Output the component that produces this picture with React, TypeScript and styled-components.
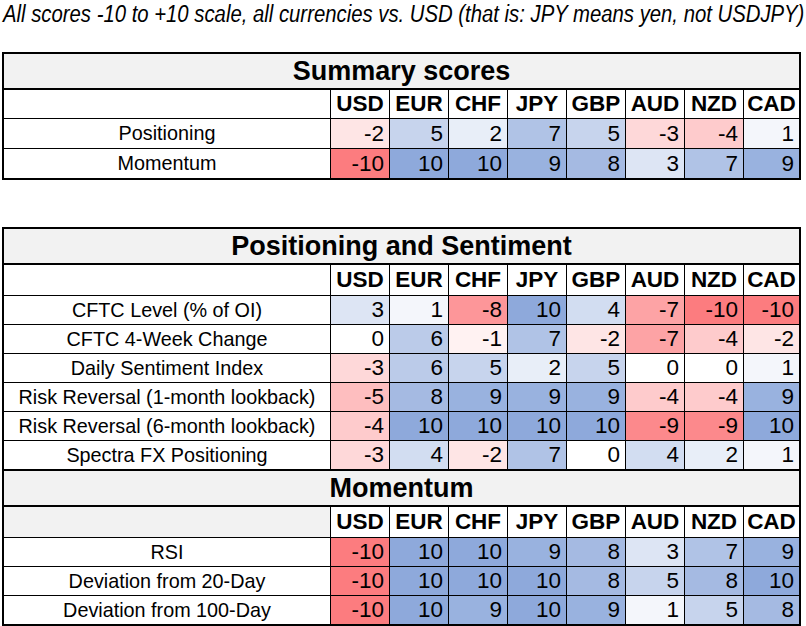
import React from "react";
import styled, { createGlobalStyle } from "styled-components";

const GlobalStyle = createGlobalStyle`
  body {
    margin: 0;
    background: #fff;
    font-family: "Liberation Sans", Arial, sans-serif;
    color: #000;
  }
`;

const CURRENCIES = ["USD", "EUR", "CHF", "JPY", "GBP", "AUD", "NZD", "CAD"];

type Row = { label: string; values: number[] };

const summary: Row[] = [
  { label: "Positioning", values: [-2, 5, 2, 7, 5, -3, -4, 1] },
  { label: "Momentum", values: [-10, 10, 10, 9, 8, 3, 7, 9] },
];

const positioning: Row[] = [
  { label: "CFTC Level (% of OI)", values: [3, 1, -8, 10, 4, -7, -10, -10] },
  { label: "CFTC 4-Week Change", values: [0, 6, -1, 7, -2, -7, -4, -2] },
  { label: "Daily Sentiment Index", values: [-3, 6, 5, 2, 5, 0, 0, 1] },
  { label: "Risk Reversal (1-month lookback)", values: [-5, 8, 9, 9, 9, -4, -4, 9] },
  { label: "Risk Reversal (6-month lookback)", values: [-4, 10, 10, 10, 10, -9, -9, 10] },
  { label: "Spectra FX Positioning", values: [-3, 4, -2, 7, 0, 4, 2, 1] },
];

const momentum: Row[] = [
  { label: "RSI", values: [-10, 10, 10, 9, 8, 3, 7, 9] },
  { label: "Deviation from 20-Day", values: [-10, 10, 10, 10, 8, 5, 8, 10] },
  { label: "Deviation from 100-Day", values: [-10, 10, 9, 10, 9, 1, 5, 8] },
];

// 3-colour scale: red at -10, white at 0, blue at +10
function scoreColor(v: number) {
  const t = Math.min(Math.abs(v), 10) / 10;
  const end = v < 0 ? [252, 124, 127] : [142, 169, 219];
  const c = end.map((e) => Math.round(255 + (e - 255) * t));
  return `rgb(${c[0]}, ${c[1]}, ${c[2]})`;
}

const Page = styled.div`
  padding: 1px 0 0 2px;
`;

const Caption = styled.div`
  font-style: italic;
  font-size: 23.5px;
  line-height: 26px;
  white-space: nowrap;
  transform: scaleX(0.864);
  transform-origin: left center;
  margin-left: 1px;
`;

const Sheet = styled.div<{ $rows: string; $top: number }>`
  display: grid;
  grid-template-columns: 326px repeat(7, 58px) 55px;
  grid-template-rows: ${(p) => p.$rows};
  gap: 1px;
  width: max-content;
  margin-top: ${(p) => p.$top}px;
  background: #000;
  border: 2px solid #000;
`;

const Title = styled.div<{ $ruleAbove?: boolean }>`
  grid-column: 1 / -1;
  display: flex;
  align-items: center;
  justify-content: center;
  background: #f2f2f2;
  border-bottom: 1px solid #000;
  border-top: ${(p) => (p.$ruleAbove ? "1px solid #000" : "none")};
  font-size: 27px;
  font-weight: bold;
`;

const Head = styled.div<{ $shade?: boolean }>`
  display: flex;
  align-items: center;
  justify-content: center;
  background: ${(p) => (p.$shade ? "#f2f2f2" : "#fff")};
  font-size: 22.5px;
  font-weight: bold;
  white-space: nowrap;
`;

const Label = styled.div`
  display: flex;
  align-items: center;
  justify-content: center;
  background: #fff;
  font-size: 19.8px;
  white-space: nowrap;
`;

const Value = styled.div<{ $v: number }>`
  display: flex;
  align-items: center;
  justify-content: flex-end;
  padding-right: 5px;
  background: ${(p) => scoreColor(p.$v)};
  font-size: 22.5px;
`;

function HeaderRow({ shade }: { shade?: boolean }) {
  return (
    <>
      <Head $shade={shade} />
      {CURRENCIES.map((c) => (
        <Head key={c}>{c}</Head>
      ))}
    </>
  );
}

function Rows({ rows }: { rows: Row[] }) {
  return (
    <>
      {rows.map((r) => (
        <React.Fragment key={r.label}>
          <Label>{r.label}</Label>
          {r.values.map((v, i) => (
            <Value key={i} $v={v}>
              {v}
            </Value>
          ))}
        </React.Fragment>
      ))}
    </>
  );
}

export default function App() {
  return (
    <Page>
      <GlobalStyle />
      <Caption>
        All scores -10 to +10 scale, all currencies vs. USD (that is: JPY means yen, not USDJPY)
      </Caption>

      <Sheet $top={25} $rows="35px 28px 29px 29px">
        <Title>Summary scores</Title>
        <HeaderRow />
        <Rows rows={summary} />
      </Sheet>

      <Sheet $top={47} $rows="35px 30px repeat(6, 28px) 36px 30px repeat(3, 28px)">
        <Title>Positioning and Sentiment</Title>
        <HeaderRow />
        <Rows rows={positioning} />
        <Title $ruleAbove>Momentum</Title>
        <HeaderRow shade />
        <Rows rows={momentum} />
      </Sheet>
    </Page>
  );
}
